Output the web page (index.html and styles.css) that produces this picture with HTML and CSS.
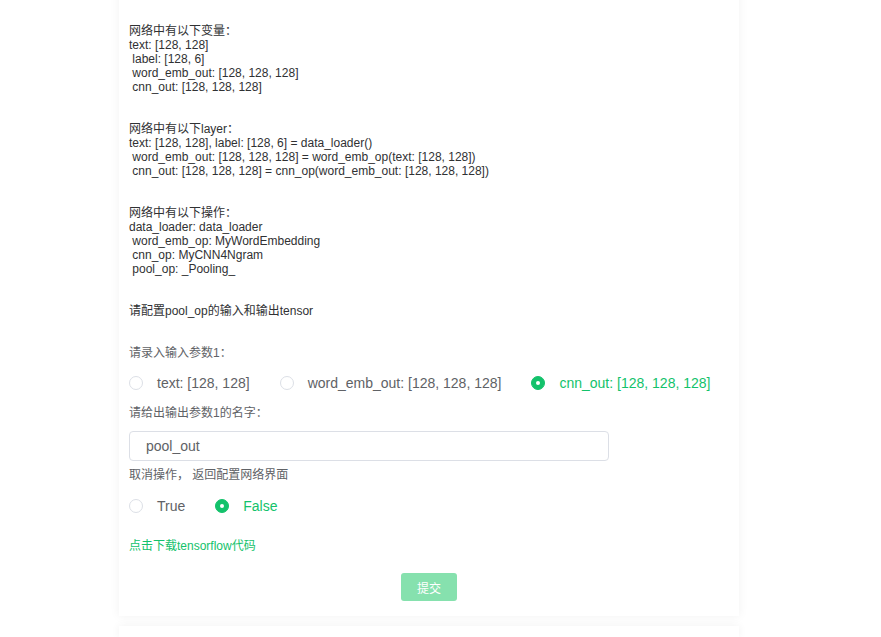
FILE: index.html
```html
<!DOCTYPE html>
<html lang="zh">
<head>
<meta charset="utf-8">
<link rel="stylesheet" href="styles.css">
</head>
<body>
<div class="page">
  <div class="card">
    <div class="info">网络中有以下变量：
text: [128, 128]
 label: [128, 6]
 word_emb_out: [128, 128, 128]
 cnn_out: [128, 128, 128]


网络中有以下layer：
text: [128, 128], label: [128, 6] = data_loader()
 word_emb_out: [128, 128, 128] = word_emb_op(text: [128, 128])
 cnn_out: [128, 128, 128] = cnn_op(word_emb_out: [128, 128, 128])


网络中有以下操作：
data_loader: data_loader
 word_emb_op: MyWordEmbedding
 cnn_op: MyCNN4Ngram
 pool_op: _Pooling_


请配置pool_op的输入和输出tensor</div>

    <div class="label label-first">请录入输入参数1：</div>
    <div class="radio-row">
      <label class="radio"><span class="dot"></span><span class="rtext">text: [128, 128]</span></label>
      <label class="radio"><span class="dot"></span><span class="rtext">word_emb_out: [128, 128, 128]</span></label>
      <label class="radio checked"><span class="dot"></span><span class="rtext">cnn_out: [128, 128, 128]</span></label>
    </div>

    <div class="label label-second">请给出输出参数1的名字：</div>
    <div class="input">pool_out</div>

    <div class="label label-third">取消操作， 返回配置网络界面</div>
    <div class="radio-row row-second">
      <label class="radio"><span class="dot"></span><span class="rtext">True</span></label>
      <label class="radio checked"><span class="dot"></span><span class="rtext">False</span></label>
    </div>

    <div class="link">点击下载tensorflow代码</div>
    <div class="actions"><button class="submit">提交</button></div>
  </div>
  <div class="card card-next"></div>
</div>
</body>
</html>
```
FILE: styles.css
```css
html, body {
  margin: 0;
  padding: 0;
  background: #ffffff;
  font-family: "Liberation Sans", Arial, "Noto Sans CJK SC", sans-serif;
  overflow: hidden;
}
.page {
  width: 620px;
  margin-left: 119px;
}
.card {
  background: #fff;
  box-shadow: 0 0 10px rgba(0, 0, 0, 0.06);
  margin-top: -20px;
  padding: 44px 10px 15px 10px;
}
.card-next {
  margin-top: 10px;
  height: 11px;
  padding: 0;
}
.info {
  white-space: pre-wrap;
  font-size: 12px;
  line-height: 14px;
  color: #303133;
}
.label {
  font-size: 12px;
  line-height: 14px;
  color: #606266;
}
.label-first { margin-top: 28px; }
.label-second { margin-top: 13px; }
.label-third { margin-top: 7px; }
.radio-row {
  display: flex;
  align-items: center;
  height: 20px;
  margin-top: 13px;
}
.row-second { margin-top: 14px; }
.radio {
  display: flex;
  align-items: center;
  flex-shrink: 0;
  white-space: nowrap;
  margin-right: 30px;
  font-size: 14px;
  color: #606266;
}
.dot {
  box-sizing: border-box;
  flex-shrink: 0;
  width: 14px;
  height: 14px;
  border: 1px solid #dcdfe6;
  border-radius: 50%;
  background: #fff;
  position: relative;
}
.rtext {
  padding-left: 14px;
}
.radio.checked .dot {
  background: #13c26b;
  border-color: #13c26b;
}
.radio.checked .dot::after {
  content: "";
  position: absolute;
  width: 4px;
  height: 4px;
  border-radius: 50%;
  background: #fff;
  left: 4px;
  top: 4px;
}
.radio.checked .rtext {
  color: #13c26b;
}
.input {
  box-sizing: border-box;
  margin-top: 11px;
  width: 480px;
  height: 30px;
  border: 1px solid #dcdfe6;
  border-radius: 4px;
  padding-left: 16px;
  font-size: 14px;
  line-height: 28px;
  color: #606266;
}
.link {
  margin-top: 23px;
  font-size: 12px;
  line-height: 14px;
  color: #13c26b;
}
.actions {
  display: flex;
  justify-content: center;
  margin-top: 20px;
}
.submit {
  width: 56px;
  height: 28px;
  border: none;
  border-radius: 3px;
  background: #86e1ae;
  color: #fff;
  font-family: "Liberation Sans", Arial, "Noto Sans CJK SC", sans-serif;
  font-size: 12px;
  padding: 0;
}
```
